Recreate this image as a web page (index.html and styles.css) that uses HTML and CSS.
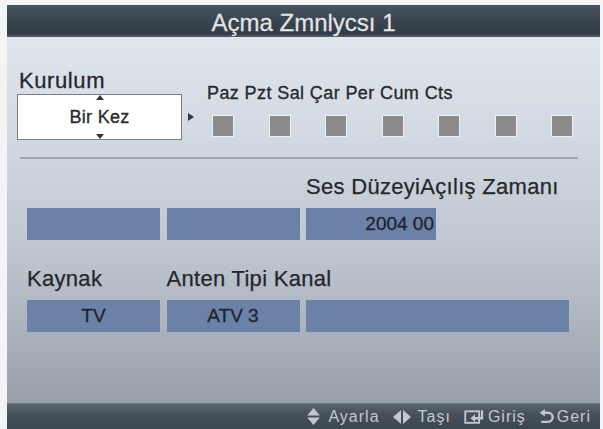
FILE: index.html
```html
<!DOCTYPE html>
<html lang="tr">
<head>
<meta charset="utf-8">
<title>Açma Zmnlycsı 1</title>
<link rel="stylesheet" href="styles.css">
</head>
<body>
<div class="screen">
  <div class="titlebar">Açma Zmnlycsı 1</div>
  <div class="content">
    <div class="setup">
      <div class="setup-left">
        <div class="kurulum">Kurulum</div>
        <div class="select-row">
          <div class="select">
            <span class="tri-up"></span>
            <span class="select-value">Bir Kez</span>
            <span class="tri-down"></span>
          </div>
          <span class="tri-right"></span>
        </div>
      </div>
      <div class="days">
        <div class="day-labels">Paz Pzt Sal Çar Per Cum Cts</div>
        <div class="day-boxes">
          <span class="day-box"></span><span class="day-box"></span><span class="day-box"></span><span class="day-box"></span><span class="day-box"></span><span class="day-box"></span><span class="day-box"></span>
        </div>
      </div>
    </div>
    <div class="separator"></div>
    <div class="fields">
      <div class="label col3">Ses DüzeyiAçılış Zamanı</div>
      <div class="bar"></div>
      <div class="bar"></div>
      <div class="bar bar-short">2004 00</div>
      <div class="label row2">Kaynak</div>
      <div class="label row2 span2">Anten Tipi Kanal</div>
      <div class="bar centered">TV</div>
      <div class="bar centered">ATV 3</div>
      <div class="bar"></div>
    </div>
  </div>
  <div class="footer">
    <div class="hint">
      <svg class="ico ico-ud" viewBox="0 0 12 16" width="13" height="17"><polygon points="6,0 12,7 0,7"/><polygon points="0,9 12,9 6,16"/></svg>
      <span>Ayarla</span>
    </div>
    <div class="hint">
      <svg class="ico ico-lr" viewBox="0 0 18 14" width="18" height="14"><polygon points="8,0 8,14 0,7"/><polygon points="10,0 18,7 10,14"/></svg>
      <span>Taşı</span>
    </div>
    <div class="hint">
      <svg class="ico ico-enter" viewBox="0 0 18 13" width="21" height="15"><rect x="1" y="2" width="12" height="10" fill="none" stroke-width="1.6"/><path d="M15.5 1 V8 H9" fill="none" stroke-width="2"/><polygon points="5.5,8 9.5,4.5 9.5,11.5" stroke="none"/></svg>
      <span>Giriş</span>
    </div>
    <div class="hint">
      <svg class="ico ico-back" viewBox="0 0 14 14" width="15" height="15"><path d="M5 3.5 H8.5 A4.2 4.2 0 0 1 8.5 12 H2" fill="none" stroke-width="2.2"/><polygon points="0.5,3.5 5.5,0 5.5,7" stroke="none"/></svg>
      <span>Geri</span>
    </div>
  </div>
</div>
</body>
</html>
```

FILE: styles.css
```css
* { box-sizing: border-box; }
html, body { margin: 0; padding: 0; }
body {
  width: 603px;
  height: 429px;
  overflow: hidden;
  background: #f4f4f4;
  font-family: "Liberation Sans", Arial, sans-serif;
  color: #24272c;
}
.screen {
  margin: 5px 3px 0 7px;
  height: 424px;
  display: flex;
  flex-direction: column;
}
.titlebar {
  flex: none;
  height: 32px;
  padding-top: 3px;
  line-height: 29px;
  font-size: 24px;
  text-align: center;
  color: #e2e4e7;
  -webkit-text-stroke: 0.3px #e2e4e7;
  text-shadow: 0 0 1px rgba(0,0,0,0.5);
  background: linear-gradient(#48535f, #39434e 55%, #333d48 90%, #56616c);
}
.content {
  flex: 1;
  padding-top: 32px;
  background: linear-gradient(#dfe5ec, #d3dae3 25%, #bec6d0 58%, #98a0ab);
}
.setup {
  display: flex;
  align-items: flex-start;
}
.setup-left {
  margin-left: 10px;
}
.kurulum {
  font-size: 22px;
  line-height: 24px;
  letter-spacing: 0.6px;
  padding-left: 2px;
  -webkit-text-stroke: 0.3px #24272c;
}
.select-row {
  margin-top: 1px;
  display: flex;
  align-items: center;
}
.select {
  width: 165px;
  height: 46px;
  background: #ffffff;
  border: 1px solid #7a7e85;
  display: flex;
  flex-direction: column;
  align-items: center;
  justify-content: space-between;
}
.tri-up {
  width: 0;
  height: 0;
  border-left: 4px solid transparent;
  border-right: 4px solid transparent;
  border-bottom: 5px solid #33363b;
}
.tri-down {
  width: 0;
  height: 0;
  border-left: 4px solid transparent;
  border-right: 4px solid transparent;
  border-top: 5px solid #33363b;
}
.select-value {
  font-size: 18px;
  line-height: 20px;
  letter-spacing: 0.3px;
  color: #2a2c30;
  -webkit-text-stroke: 0.35px #2a2c30;
}
.tri-right {
  margin-left: 6px;
  width: 0;
  height: 0;
  border-top: 4px solid transparent;
  border-bottom: 4px solid transparent;
  border-left: 6px solid #2f3848;
}
.days {
  margin-left: 13px;
  margin-top: 13.5px;
}
.day-labels {
  font-size: 18px;
  line-height: 20px;
  letter-spacing: 0.4px;
  white-space: nowrap;
  -webkit-text-stroke: 0.3px #24272c;
}
.day-boxes {
  display: flex;
  gap: 34.5px;
  margin-top: 12.5px;
  margin-left: 5px;
}
.day-box {
  width: 22px;
  height: 22px;
  background: #8a8a8b;
  border: 1px solid #eef0f3;
}
.separator {
  height: 2px;
  background: #9ca4af;
  margin: 17px 22px 0 13px;
}
.fields {
  display: grid;
  grid-template-columns: 133px 133px 263px;
  column-gap: 6.5px;
  margin: 16px 0 0 20px;
}
.label {
  font-size: 22px;
  line-height: 24px;
  letter-spacing: 0.3px;
  white-space: nowrap;
  -webkit-text-stroke: 0.25px #24272c;
}
.col3 { grid-column: 3; }
.span2 { grid-column: 2 / span 2; }
.row2 { margin-top: 27px; }
.bar {
  height: 32px;
  margin-top: 9px;
  background: #6c81a7;
  font-size: 19px;
  line-height: 32px;
  color: #1f232b;
  -webkit-text-stroke: 0.3px #1f232b;
}
.bar-short {
  width: 130px;
  text-align: right;
  padding-right: 2px;
}
.centered { text-align: center; }
.footer {
  flex: none;
  height: 26px;
  display: flex;
  justify-content: flex-end;
  align-items: center;
  gap: 13px;
  padding-right: 9px;
  font-size: 16px;
  letter-spacing: 1px;
  color: #c2c7cd;
  background: linear-gradient(#5a6570, #46505b 40%, #3d4751);
  border-top: 1px solid #6c7681;
}
.hint {
  display: flex;
  align-items: center;
}
.ico {
  fill: #c2c7cd;
  stroke: #c2c7cd;
}
.ico-ud { stroke: none; margin-right: 8px; }
.ico-lr { stroke: none; margin-right: 7px; }
.ico-enter, .ico-back { margin-right: 3px; }
```
